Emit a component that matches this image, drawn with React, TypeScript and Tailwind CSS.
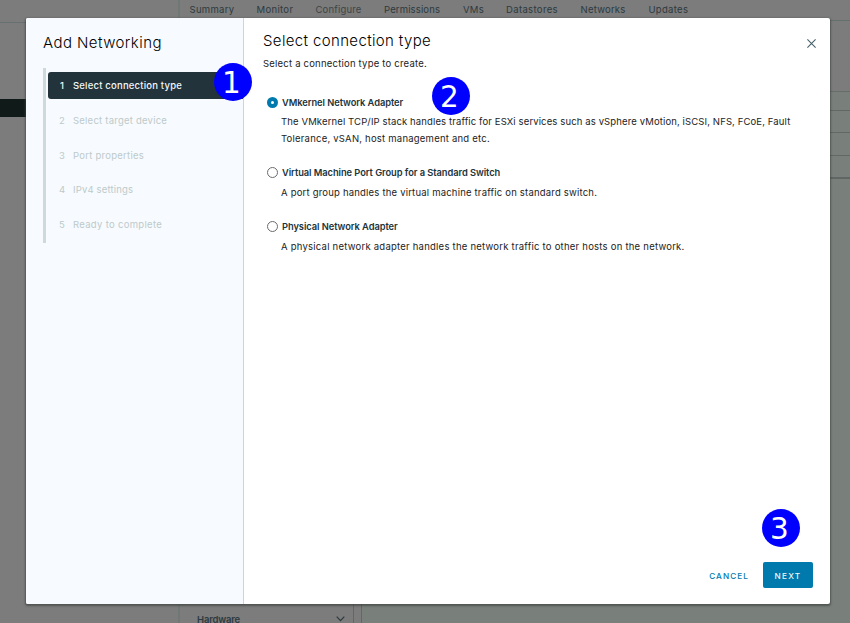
const tabs = [
  { label: 'Summary', style: 'w-[67px] tracking-[0.31px]' },
  { label: 'Monitor', style: 'w-[59px] tracking-[0.33px]' },
  { label: 'Configure', style: 'w-[68.5px] tracking-[0.18px] text-[#3c4547]' },
  { label: 'Permissions', style: 'w-[79px] tracking-[0.14px]' },
  { label: 'VMs', style: 'w-[43px] tracking-[0.25px]' },
  { label: 'Datastores', style: 'w-[74.5px] tracking-[0.36px]' },
  { label: 'Networks', style: 'w-[68px] tracking-[0.23px]' },
  { label: 'Updates', style: 'w-[60px] tracking-[0.3px]' },
];

const steps = [
  { label: 'Select target device', style: 'h-[35px] tracking-[0.23px]' },
  { label: 'Port properties', style: 'h-[34px] tracking-[0.26px]' },
  { label: 'IPv4 settings', style: 'h-[35px] tracking-[0.16px]' },
  { label: 'Ready to complete', style: 'h-[35px] tracking-[0.31px]' },
];

function Radio({ checked = false }: { checked?: boolean }) {
  return checked ? (
    <span className="flex size-[11px] items-center justify-center rounded-full bg-[#0079ad]">
      <span className="size-[3px] rounded-full bg-white" />
    </span>
  ) : (
    <span className="size-[11px] rounded-full border border-[#6b6b6b] bg-white" />
  );
}

function OptionTitle({ label, checked }: { label: string; checked?: boolean }) {
  return (
    <label className="flex h-4 items-center gap-1 text-[9.3px] font-semibold tracking-[-0.05px] text-[#21333b]">
      <Radio checked={checked} />
      <span className="pt-px">{label}</span>
    </label>
  );
}

function Badge({ n, place }: { n: number; place: string }) {
  return (
    <div
      className={`absolute flex size-[38px] items-center justify-center rounded-full bg-[#0000ff] pt-1 pr-[3px] font-['DejaVu_Sans',sans-serif] text-[29.5px] leading-none text-white ${place}`}
    >
      {n}
    </div>
  );
}

function Backdrop() {
  return (
    <div className="flex h-full bg-[#7c7c7c] text-[#2c3a3f]">
      <div className="flex w-[178px] flex-col">
        <div className="h-[23px] border-b border-[#667070]" />
        <div className="mt-[76px] h-[18px] bg-[#101a18]" />
      </div>
      <div className="flex flex-1 flex-col border-l-2 border-[#707876]">
        <div className="flex h-[21px] items-center border-b border-[#65706d] pl-[9.5px] text-[9.5px]">
          {tabs.map((t) => (
            <span key={t.label} className={`shrink-0 whitespace-nowrap ${t.style}`}>
              {t.label}
            </span>
          ))}
        </div>
        <div className="flex flex-1">
          <div className="flex w-[174px] items-end justify-between border-r border-[#666] pr-2 pl-[17px]">
            <span className="h-[7px] text-[9.5px] leading-[7px] font-semibold tracking-[-0.2px]">Hardware</span>
            <svg className="mb-[1px] h-[6px] w-[9px]" viewBox="0 0 9 6" fill="none" stroke="currentColor" strokeWidth="1.2">
              <path d="M0.7 0.7 4.5 4.7 8.3 0.7" />
            </svg>
          </div>
          <div className="ml-[7px] flex flex-1 flex-col border-l border-[#666]">
            <div className="h-[71px] border-b border-[#666e6a]" />
            <div className="flex-1 bg-[#797f7a]">
              <div className="h-[19px] border-b border-[#626865]" />
              <div className="h-[22px] border-b border-[#626865]" />
              <div className="h-[23px] border-b border-[#626865]" />
              <div className="h-[23px] border-b-2 border-[#606663]" />
            </div>
          </div>
        </div>
      </div>
    </div>
  );
}

function Wizard() {
  return (
    <div className="absolute top-[18px] left-[26px] flex h-[586px] w-[804px] rounded-[2px] bg-white shadow-[0_1px_2px_1px_rgba(60,65,62,0.65)]">
      <aside className="flex w-[218px] flex-col rounded-l-[2px] border-r border-[#ccd4dc] bg-[#f7fbff] pl-[17px]">
        <h1 className="mt-[14px] h-[22px] text-[15px] leading-[22px] font-light tracking-[0.43px] text-black">
          Add Networking
        </h1>
        <ol className="mt-[14px] h-[175px] border-l-3 border-[#cddada] pt-1 pl-[2px] text-[9.5px] text-[#bdcaca]">
          <li className="flex h-[27px] items-center rounded-l-[3px] bg-[#22333b] pt-px pl-3 font-medium text-[#f3f7f8]">
            <span className="w-[13px]">1</span>
            <span className="tracking-[0.2px]">Select connection type</span>
          </li>
          <li className="h-[5px]" />
          {steps.map((s, i) => (
            <li key={s.label} className={`flex items-center pl-[11px] ${s.style}`}>
              <span className="w-[14px]">{i + 2}</span>
              <span>{s.label}</span>
            </li>
          ))}
        </ol>
      </aside>
      <main className="flex flex-1 flex-col pl-[19px] text-[9.5px] text-[#1c1c1c]">
        <header className="flex h-[34px] justify-between pr-[14px]">
          <h2 className="mt-3 text-[15px] leading-[22px] font-light tracking-[0.36px] text-black">
            Select connection type
          </h2>
          <svg className="mt-[21px] size-[9px]" viewBox="0 0 9 9" fill="none" stroke="#46606a" strokeWidth="1.1">
            <path d="M0.4 0.4 8.6 8.6M8.6 0.4 0.4 8.6" />
          </svg>
        </header>
        <p className="mt-1 h-4 leading-4 tracking-[0.21px]">Select a connection type to create.</p>
        <div className="mt-[22px] pl-1">
          <OptionTitle label="VMkernel Network Adapter" checked />
          <p className="mt-[3px] pl-[14px] leading-[17px] whitespace-nowrap">
            <span className="tracking-[0.125px]">
              The VMkernel TCP/IP stack handles traffic for ESXi services such as vSphere vMotion, iSCSI, NFS, FCoE, Fault
            </span>
            <br />
            <span className="tracking-[0.22px]">Tolerance, vSAN, host management and etc.</span>
          </p>
        </div>
        <div className="mt-[17px] pl-1">
          <OptionTitle label="Virtual Machine Port Group for a Standard Switch" />
          <p className="mt-1 pl-[14px] leading-[17px] tracking-[0.2px]">
            A port group handles the virtual machine traffic on standard switch.
          </p>
        </div>
        <div className="mt-[17px] pl-1">
          <OptionTitle label="Physical Network Adapter" />
          <p className="mt-1 pl-[14px] leading-[17px] tracking-[0.235px]">
            A physical network adapter handles the network traffic to other hosts on the network.
          </p>
        </div>
        <footer className="mt-auto mr-[17px] mb-4 flex h-[26px] items-center justify-end gap-[14px] text-[8.2px] font-medium">
          <button className="pt-[2px] tracking-[1.08px] text-[#0079ad]">CANCEL</button>
          <button className="h-[26px] w-[50px] rounded-[2px] bg-[#0079ad] pt-[2px] tracking-[1.25px] text-[#f2f8fb]">
            NEXT
          </button>
        </footer>
      </main>
    </div>
  );
}

export default function App() {
  return (
    <div className="relative h-[623px] w-[850px] overflow-hidden font-[Inter,sans-serif]">
      <Backdrop />
      <Wizard />
      <Badge n={1} place="left-[214px] top-[63px]" />
      <Badge n={2} place="left-[432px] top-[77px]" />
      <Badge n={3} place="left-[762px] top-[509px]" />
    </div>
  );
}
